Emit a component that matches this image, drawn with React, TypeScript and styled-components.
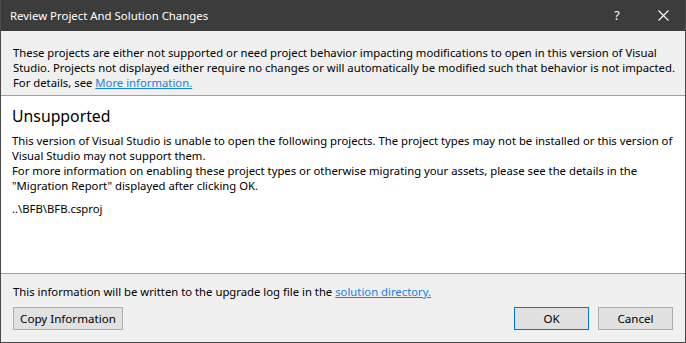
import React from 'react'
import styled, { createGlobalStyle } from 'styled-components'

const GlobalStyle = createGlobalStyle`
  html, body {
    margin: 0;
    padding: 0;
    background: #ffffff;
  }
  body {
    font-family: "Segoe UI", "Noto Sans", "Open Sans", sans-serif;
    font-size: 11.3px;
    color: #000000;
  }
`

const Window = styled.div`
  width: 686px;
  height: 343px;
  box-sizing: border-box;
  display: flex;
  flex-direction: column;
  border: 1px solid #4a4a4a;
  border-top: none;
  background: #f0f0f0;
  overflow: hidden;
`

const TitleBar = styled.div`
  height: 31px;
  flex: 0 0 31px;
  margin: 0 -1px;
  display: flex;
  align-items: center;
  background: #3c3c3c;
  color: #ffffff;
`

const Title = styled.div`
  flex: 1;
  padding-left: 10px;
  font-size: 11.4px;
  white-space: nowrap;
`

const CaptionButton = styled.div`
  width: 46px;
  height: 31px;
  display: flex;
  align-items: center;
  justify-content: center;
  color: #ffffff;
  font-size: 12.5px;
`

const InfoPanel = styled.div`
  flex: 0 0 auto;
  height: 65px;
  box-sizing: border-box;
  padding: 14px 12px 0 12px;
  border-bottom: 1px solid #a0a0a0;
  background: #f0f0f0;
`

const Para = styled.p`
  margin: 0;
  line-height: 15px;
  white-space: nowrap;
`

const Link = styled.a`
  color: #1a80e6;
  text-decoration: underline;
  cursor: pointer;
`

const Content = styled.div`
  flex: 1;
  background: #ffffff;
  padding: 8px 11px 0 11px;
  border-bottom: 1px solid #a0a0a0;
`

const Heading = styled.h2`
  margin: 0 0 5px 0;
  font-size: 15.8px;
  font-weight: 400;
  line-height: 24px;
`

const ProjectPath = styled.div`
  margin-top: 8px;
  line-height: 15px;
`

const Footer = styled.div`
  flex: 0 0 auto;
  height: 68px;
  box-sizing: border-box;
  padding: 10px 12px 0 12px;
  display: flex;
  flex-direction: column;
  gap: 8px;
`

const ButtonRow = styled.div`
  display: flex;
  align-items: center;
  gap: 9px;
`

const Spacer = styled.div`
  flex: 1;
`

const Button = styled.button<{ $primary?: boolean; $width: number }>`
  width: ${({ $width }) => $width}px;
  height: 23px;
  box-sizing: border-box;
  padding: 0;
  background: #e1e1e1;
  border: 1px solid ${({ $primary }) => ($primary ? '#0078d7' : '#adadad')};
  font-family: inherit;
  font-size: 11.6px;
  color: #000000;
`

const CloseIcon = () => (
  <svg width="11" height="11" viewBox="0 0 11 11">
    <path d="M0.5 0.5 L10.5 10.5 M10.5 0.5 L0.5 10.5" stroke="#ffffff" strokeWidth="1.1" fill="none" />
  </svg>
)

export default function App() {
  return (
    <>
      <GlobalStyle />
      <Window>
        <TitleBar>
          <Title>Review Project And Solution Changes</Title>
          <CaptionButton>?</CaptionButton>
          <CaptionButton>
            <CloseIcon />
          </CaptionButton>
        </TitleBar>
        <InfoPanel>
          <Para>
            These projects are either not supported or need project behavior impacting modifications to open in this version of Visual
            <br />
            Studio. Projects not displayed either require no changes or will automatically be modified such that behavior is not impacted.
            <br />
            For details, see <Link>More information.</Link>
          </Para>
        </InfoPanel>
        <Content>
          <Heading>Unsupported</Heading>
          <Para>
            This version of Visual Studio is unable to open the following projects. The project types may not be installed or this version of
            <br />
            Visual Studio may not support them.
            <br />
            For more information on enabling these project types or otherwise migrating your assets, please see the details in the
            <br />
            "Migration Report" displayed after clicking OK.
          </Para>
          <ProjectPath>..\BFB\BFB.csproj</ProjectPath>
        </Content>
        <Footer>
          <Para>
            This information will be written to the upgrade log file in the <Link>solution directory.</Link>
          </Para>
          <ButtonRow>
            <Button $width={110}>Copy Information</Button>
            <Spacer />
            <Button $width={75} $primary>OK</Button>
            <Button $width={75}>Cancel</Button>
          </ButtonRow>
        </Footer>
      </Window>
    </>
  )
}
